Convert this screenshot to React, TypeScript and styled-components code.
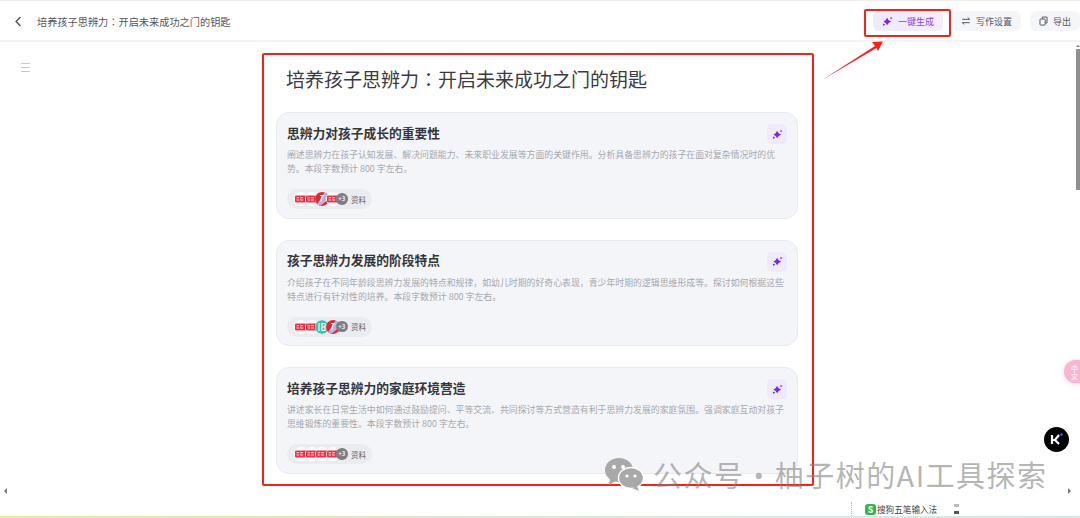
import * as React from 'react';
import styled, { createGlobalStyle } from 'styled-components';

const GlobalStyle = createGlobalStyle`
  html, body {
    margin: 0;
    height: 100%;
    background: #fff;
    overflow: hidden;
    font-family: "Noto Sans CJK SC", "Liberation Sans", sans-serif;
  }
`;

const Page = styled.div`
  position: relative;
  width: 1080px;
  height: 518px;
  display: flex;
  flex-direction: column;
  overflow: hidden;
  background: #fff;
`;

const TopBar = styled.header`
  flex: 0 0 auto;
  height: 42px;
  display: flex;
  align-items: center;
  padding: 1px 0 0 14px;
  border-top: 1px solid #eeeeee;
  border-bottom: 2px solid #f3f3f4;
  box-sizing: border-box;
`;

const BackButton = styled.span`
  display: flex;
  width: 11px;
`;

const DocTitle = styled.div`
  margin-left: 12px;
  font-size: 10.2px;
  color: #55565c;
  white-space: nowrap;
`;

const Colon = styled.span`
  font-family: "Noto Sans CJK TC", sans-serif;
`;

const Actions = styled.div`
  margin-left: auto;
  display: flex;
  gap: 9px;
`;

const ActionButton = styled.div<{ $primary?: boolean }>`
  height: 20px;
  display: flex;
  align-items: center;
  gap: 5px;
  padding: 0 9px;
  border-radius: 6px;
  font-size: 9px;
  white-space: nowrap;
  color: ${p => (p.$primary ? '#8a45e8' : '#55565c')};
  background: ${p => (p.$primary ? 'linear-gradient(90deg, #eeeafd, #f6ecfe)' : '#f5f6fa')};
`;

const Body = styled.div`
  flex: 1;
  min-height: 0;
  display: flex;
`;

const Gutter = styled.aside`
  flex: 0 0 276px;
  padding: 21px 0 0 21px;
  box-sizing: border-box;
`;

const MenuIcon = styled.div`
  width: 9px;
  height: 7px;
  border-top: 1px solid #c9c9c9;
  border-bottom: 1px solid #c9c9c9;
  position: relative;
  &::after {
    content: '';
    position: absolute;
    left: 0;
    right: 0;
    top: 3px;
    height: 1px;
    background: #c9c9c9;
  }
`;

const Column = styled.main`
  flex: 0 0 522px;
`;

const Heading = styled.h1`
  margin: 0;
  padding: 22px 0 0 10px;
  height: 70px;
  box-sizing: border-box;
  font-size: 19px;
  line-height: 30px;
  font-weight: 400;
  color: #3a3b40;
  white-space: nowrap;
`;

const CardList = styled.div`
  display: flex;
  flex-direction: column;
  gap: 21px;
`;

const Card = styled.section`
  position: relative;
  height: 106.5px;
  box-sizing: border-box;
  padding: 10.5px 10px 0;
  background: #f4f5f9;
  border: 1px solid #e9eaef;
  border-radius: 13px;
`;

const CardTitle = styled.h2`
  margin: 0;
  font-size: 12.75px;
  line-height: 18px;
  font-weight: 700;
  color: #35363b;
`;

const CardText = styled.p`
  margin: 6.5px 0 0;
  font-size: 8.9px;
  line-height: 14px;
  color: #a6a8ad;
  white-space: pre;
`;

const SparkleButton = styled.span`
  position: absolute;
  top: 11px;
  right: 10px;
  width: 20px;
  height: 20px;
  border-radius: 5px;
  background: #efebfc;
  display: flex;
  align-items: center;
  justify-content: center;
`;

const SourceChip = styled.div`
  margin-top: 13px;
  height: 20px;
  width: fit-content;
  display: flex;
  align-items: center;
  padding: 0 6px 0 7px;
  border-radius: 10px;
  background: #ebecf0;
`;

const Logo = styled.span`
  width: 14px;
  height: 14px;
  margin-right: -3.5px;
  flex: 0 0 auto;
  border-radius: 50%;
  display: flex;
  overflow: hidden;
  background: #fff;
`;

const MoreBadge = styled.span`
  width: 11.5px;
  height: 11.5px;
  border-radius: 50%;
  background: #7d7e86;
  color: #eee;
  font-size: 6px;
  font-weight: 700;
  line-height: 11.5px;
  text-align: center;
  flex: 0 0 auto;
  position: relative;
`;

const ChipLabel = styled.span`
  margin-left: 3.5px;
  font-size: 7.5px;
  color: #66676d;
`;

const Annotation = styled.div`
  position: absolute;
  pointer-events: none;
`;

const RedFrame = styled(Annotation)`
  box-sizing: border-box;
  border: 2px solid #f5221c;
  border-radius: 2px;
`;

const ContentFrame = styled(RedFrame)`
  left: 262px;
  top: 53px;
  width: 552px;
  height: 433px;
`;

const ButtonFrame = styled(RedFrame)`
  left: 864px;
  top: 9px;
  width: 87px;
  height: 28px;
`;

const Arrow = styled.svg`
  position: absolute;
  left: 820px;
  top: 38px;
`;

const Scrollbar = styled(Annotation)`
  right: 0;
  top: 49px;
  width: 4.5px;
  height: 141px;
  background: #8f8f8f;
  &::before {
    content: '';
    position: absolute;
    top: -4px;
    left: 0;
    border-left: 2px solid transparent;
    border-right: 2px solid transparent;
    border-bottom: 2px solid #777;
  }
`;

const PinkTab = styled(Annotation)`
  left: 1064px;
  top: 360px;
  width: 28px;
  height: 23px;
  border-radius: 12px;
  background: #f9b6d3;
  color: #fff;
  font-size: 7px;
  line-height: 8px;
  padding: 4px 0 0 7px;
  box-sizing: border-box;
  box-shadow: 0 1px 4px rgba(240, 170, 200, 0.5);
`;

const KBadge = styled(Annotation)`
  left: 1044px;
  top: 427px;
  width: 25px;
  height: 25px;
  border-radius: 50%;
  background: #000;
  display: flex;
  align-items: center;
  justify-content: center;
`;

const Watermark = styled(Annotation)`
  left: 604px;
  top: 455px;
  display: flex;
  align-items: center;
  gap: 9px;
  font-size: 29px;
  line-height: 38px;
  letter-spacing: 1.45px;
  color: rgba(125, 125, 125, 0.58);
  white-space: nowrap;
`;

const ScrollTick = styled(Annotation)<{ $x: number }>`
  left: ${p => p.$x}px;
  top: 488px;
  width: 0;
  height: 0;
  border-top: 3px solid transparent;
  border-bottom: 3px solid transparent;
  ${p => (p.$x < 100 ? 'border-right: 3px solid #777;' : 'border-left: 3px solid #777;')}
`;

const ImeBar = styled(Annotation)`
  left: 851px;
  top: 502px;
  height: 14px;
  display: flex;
  align-items: center;
  gap: 1px;
  border-left: 1px dotted #bbb;
  padding-left: 13px;
  font-size: 8.6px;
  color: #444;
  white-space: nowrap;
`;

const ImeLogo = styled.span`
  width: 11px;
  height: 11px;
  border-radius: 3px;
  background: #36b54a;
  color: #fff;
  font-size: 9px;
  font-weight: 700;
  line-height: 11px;
  text-align: center;
`;

const ImeDots = styled.span`
  margin-left: 16px;
  width: 5px;
  height: 10px;
  border-top: 3px solid #bbb;
  border-bottom: 3px solid #555;
  box-sizing: border-box;
`;

const BottomEdge = styled(Annotation)`
  left: 0;
  right: 0;
  bottom: 0;
  height: 2px;
  background: linear-gradient(90deg, #e9ea9e, #e6e3c0 30%, #d8ece6 70%, #cfe9e6);
`;

const Sparkle = () => (
  <svg width="11" height="11" viewBox="0 0 12 12">
    <path d="M5.6 2 7.2 4.6 10 6 7.2 7.6 5.6 10.2 4 7.6 1.6 6 4 4.6Z" fill="#7a22f0" />
    <path d="M2 8.2 3.2 9.4 2 10.8.8 9.4Z" fill="#4a2fe0" />
    <circle cx="10" cy="2.4" r="1.2" fill="#a56cf5" />
  </svg>
);

const SwapIcon = () => (
  <svg width="10" height="10" viewBox="0 0 12 12" fill="none" stroke="#55565c" strokeWidth="1.2">
    <path d="M1.5 4h9L8 1.8M10.5 8h-9L4 10.2" />
  </svg>
);

const CopyIcon = () => (
  <svg width="9" height="10" viewBox="0 0 11 12" fill="none" stroke="#55565c" strokeWidth="1.2">
    <rect x="1.2" y="3.6" width="6.4" height="7.4" rx="1" />
    <path d="M4 3.4V1.2h5.8v7.2H7.8" />
  </svg>
);

const TitleText = () => (
  <>
    培养孩子思辨力<Colon>：</Colon>开启未来成功之门的钥匙
  </>
);

type LogoKind = 'news' | 'shield' | 'teal';

const SourceLogo = ({ kind }: { kind: LogoKind }) => (
  <Logo>
    <svg width="14" height="14" viewBox="0 0 14 14">
      {kind === 'news' && (
        <>
          <rect x="1" y="3.5" width="12" height="7" rx="1" fill="#ee3347" />
          <path d="M2.5 5.7h2.6M2.5 8h2.6M6 5.7h3M6 8h3" stroke="#fbd5da" strokeWidth="1.1" />
        </>
      )}
      {kind === 'shield' && (
        <>
          <rect width="14" height="14" fill="#dc2a30" />
          <path d="M10 0 14 0 14 7 5 14 1 14Z" fill="#b9b2df" />
          <path d="M5 3.5h4M7.2 3.5 5.8 9.5" stroke="#fff" strokeWidth="1.2" fill="none" />
        </>
      )}
      {kind === 'teal' && (
        <>
          <circle cx="7" cy="7" r="7" fill="#45bfae" />
          <path d="M4 3v8M7 3.5h3v7H7zM7 7h3" stroke="#fff" strokeWidth="1.1" fill="none" />
        </>
      )}
    </svg>
  </Logo>
);

const CARDS: { title: string; text: string; logos: LogoKind[] }[] = [
  {
    title: '思辨力对孩子成长的重要性',
    text: '阐述思辨力在孩子认知发展、解决问题能力、未来职业发展等方面的关键作用。分析具备思辨力的孩子在面对复杂情况时的优\n势。本段字数预计 800 字左右。',
    logos: ['news', 'news', 'shield', 'news'],
  },
  {
    title: '孩子思辨力发展的阶段特点',
    text: '介绍孩子在不同年龄段思辨力发展的特点和规律，如幼儿时期的好奇心表现，青少年时期的逻辑思维形成等。探讨如何根据这些\n特点进行有针对性的培养。本段字数预计 800 字左右。',
    logos: ['news', 'news', 'teal', 'shield'],
  },
  {
    title: '培养孩子思辨力的家庭环境营造',
    text: '讲述家长在日常生活中如何通过鼓励提问、平等交流、共同探讨等方式营造有利于思辨力发展的家庭氛围。强调家庭互动对孩子\n思维锻炼的重要性。本段字数预计 800 字左右。',
    logos: ['news', 'news', 'news', 'news'],
  },
];

export default function App() {
  return (
    <Page>
      <GlobalStyle />
      <TopBar>
        <BackButton>
          <svg width="8" height="11" viewBox="0 0 8 11" fill="none" stroke="#444" strokeWidth="1.2">
            <path d="M6.5 1 2 5.5 6.5 10" />
          </svg>
        </BackButton>
        <DocTitle>
          <TitleText />
        </DocTitle>
        <Actions>
          <ActionButton $primary>
            <Sparkle />
            一键生成
          </ActionButton>
          <ActionButton>
            <SwapIcon />
            写作设置
          </ActionButton>
          <ActionButton>
            <CopyIcon />
            导出
          </ActionButton>
        </Actions>
      </TopBar>
      <Body>
        <Gutter>
          <MenuIcon />
        </Gutter>
        <Column>
          <Heading>
            <TitleText />
          </Heading>
          <CardList>
            {CARDS.map(card => (
              <Card key={card.title}>
                <CardTitle>{card.title}</CardTitle>
                <CardText>{card.text}</CardText>
                <SparkleButton>
                  <Sparkle />
                </SparkleButton>
                <SourceChip>
                  {card.logos.map((kind, i) => (
                    <SourceLogo key={i} kind={kind} />
                  ))}
                  <MoreBadge>+3</MoreBadge>
                  <ChipLabel>资料</ChipLabel>
                </SourceChip>
              </Card>
            ))}
          </CardList>
        </Column>
      </Body>

      <ContentFrame />
      <ButtonFrame />
      <Arrow width="70" height="45" viewBox="0 0 70 45">
        <path d="M2 42 55 8 52 4 63 3.5 58 13 56.5 10Z" fill="#f5221c" />
      </Arrow>
      <Scrollbar />
      <PinkTab>
        中<br />文
      </PinkTab>
      <KBadge>
        <svg width="15" height="15" viewBox="0 0 15 15">
          <path d="M3 3v9M3 8h3l4-5M6 8l4 4" stroke="#fff" strokeWidth="2.2" fill="none" />
          <circle cx="12.5" cy="2.5" r="1.3" fill="#2f6bff" />
        </svg>
      </KBadge>
      <Watermark>
        <svg width="40" height="34" viewBox="0 0 40 34">
          <ellipse cx="15" cy="13" rx="14" ry="12" fill="#a9a9a9" />
          <path d="M6 21 5 28 12 24Z" fill="#a9a9a9" />
          <ellipse cx="27" cy="21" rx="12.5" ry="10.5" fill="#a9a9a9" stroke="#fff" strokeWidth="1.4" />
          <path d="M33 29 35 34 28 31Z" fill="#a9a9a9" />
          <circle cx="10" cy="10" r="2" fill="#fff" />
          <circle cx="19" cy="10" r="2" fill="#fff" />
          <circle cx="23" cy="19" r="1.6" fill="#fff" />
          <circle cx="31" cy="19" r="1.6" fill="#fff" />
        </svg>
        公众号·柚子树的AI工具探索
      </Watermark>
      <ScrollTick $x={4} />
      <ScrollTick $x={1068} />
      <ImeBar>
        <ImeLogo>S</ImeLogo>
        搜狗五笔输入法
        <ImeDots />
      </ImeBar>
      <BottomEdge />
    </Page>
  );
}
